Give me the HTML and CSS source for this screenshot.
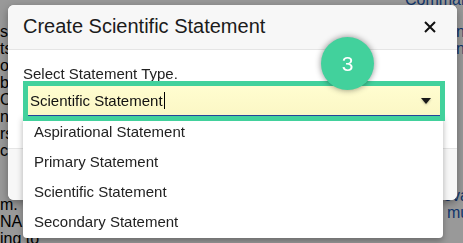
FILE: index.html
```html
<!DOCTYPE html>
<html>
<head>
<meta charset="utf-8">
<link rel="stylesheet" href="styles.css">
</head>
<body>
<div class="page">
  <div class="col-left">
    <div class="block block-upper">
      <div>s a</div><div>ts</div><div>o</div><div>b</div><div>CT</div><div>na</div><div>rs</div><div>c</div>
    </div>
    <div class="block block-lower">
      <div>m.</div><div>NA</div><div>ing to</div>
    </div>
  </div>
  <div class="col-right">
    <div class="line-cmd">Command</div>
    <div class="block block-r-upper">
      <div>nal</div><div>nd</div>
    </div>
    <div class="block block-r-lower">
      <div class="r-eva">evaluate</div><div class="r-mun">munity</div>
    </div>
  </div>
</div>
<div class="backdrop"></div>
<div class="modal">
  <div class="modal-header">
    <h4 class="modal-title">Create Scientific Statement</h4>
    <button class="close" type="button" aria-label="Close">
      <svg width="12" height="12" viewBox="0 0 12 12"><path d="M1 1 L11 11 M11 1 L1 11" stroke="#111" stroke-width="2" fill="none"/></svg>
    </button>
  </div>
  <div class="modal-body">
    <label class="field-label">Select Statement Type.</label>
    <div class="select-wrap">
      <div class="select-field">
        <span class="value">Scientific Statement</span><span class="caret"></span>
        <span class="arrow"></span>
      </div>
      <ul class="options">
        <li>Aspirational Statement</li>
        <li>Primary Statement</li>
        <li>Scientific Statement</li>
        <li>Secondary Statement</li>
      </ul>
    </div>
  </div>
  <div class="modal-footer"></div>
  <div class="step-badge">3</div>
</div>
</body>
</html>
```
FILE: styles.css
```css
html, body {
  margin: 0;
  padding: 0;
  width: 463px;
  height: 243px;
  overflow: hidden;
  background: #ffffff;
  font-family: "Liberation Sans", Arial, sans-serif;
}

.page {
  display: flex;
  justify-content: space-between;
  height: 243px;
  font-size: 16px;
  line-height: 17px;
  color: #000;
}

.col-left {
  width: 60px;
  padding-top: 23px;
}

.block-lower {
  margin-top: 37px;
}

.col-right {
  width: 58px;
  color: #1d5bb4;
  white-space: nowrap;
  line-height: 17.5px;
}

.line-cmd {
  margin-top: -9px;
}

.block-r-upper {
  margin-top: 14px;
  padding-left: 51px;
}

.block-r-lower {
  margin-top: 129px;
}

.r-eva {
  padding-left: 38px;
}

.r-mun {
  padding-left: 42px;
}

.backdrop {
  position: fixed;
  inset: 0;
  background: rgba(0, 0, 0, 0.4);
}

.modal {
  position: absolute;
  left: 8px;
  top: 5px;
  width: 449px;
  height: 195px;
  background: #fff;
  border-radius: 6px;
  box-shadow: 0 3px 9px rgba(0, 0, 0, 0.35);
  display: flex;
  flex-direction: column;
}

.modal-header {
  display: flex;
  align-items: center;
  justify-content: space-between;
  padding: 10px 0 11px 15px;
  background: #f7f7f7;
  border-bottom: 1px solid #e5e5e5;
  border-radius: 6px 6px 0 0;
}

.modal-title {
  margin: 0;
  font-size: 20px;
  line-height: 23px;
  font-weight: normal;
  color: #1b1b1b;
}

.close {
  border: 0;
  background: none;
  padding: 0;
  margin: 0 21px 0 0;
  width: 12px;
  height: 12px;
  display: flex;
}

.modal-body {
  padding: 16px 17px 32px 15px;
}

.field-label {
  display: block;
  font-size: 15px;
  line-height: 16px;
  color: #222;
  margin-bottom: 4px;
}

.select-wrap {
  position: relative;
  margin-left: 5px;
}

.select-field {
  position: relative;
  z-index: 2;
  box-sizing: border-box;
  height: 30px;
  display: flex;
  align-items: center;
  padding: 0 9px 0 2px;
  background: linear-gradient(#fffdd0, #fbf7c5);
  border-bottom: 1px solid #24449a;
  outline: 5px solid #42d19c;
  font-size: 15px;
  color: #111;
}

.caret {
  display: inline-block;
  width: 1px;
  height: 17px;
  background: #000;
  margin-left: 1px;
}

.arrow {
  margin-left: auto;
  width: 0;
  height: 0;
  border-left: 5.5px solid transparent;
  border-right: 5.5px solid transparent;
  border-top: 6px solid #1a1a1a;
  filter: drop-shadow(0 1px 1px rgba(0, 0, 0, 0.25));
}

.options {
  position: absolute;
  z-index: 1;
  top: 30px;
  left: -5px;
  width: 420px;
  margin: 0;
  padding: 1px 0;
  list-style: none;
  background: #fff;
  border-radius: 0 0 4px 4px;
  box-shadow: 0 3px 6px rgba(0, 0, 0, 0.3);
}

.options li {
  height: 30px;
  line-height: 30px;
  padding-left: 11px;
  font-size: 15px;
  color: #222;
}

.modal-footer {
  flex: 1;
  background: #f7f7f7;
  border-top: 1px solid #e5e5e5;
  border-radius: 0 0 6px 6px;
}

.step-badge {
  position: absolute;
  z-index: 3;
  left: 313px;
  top: 32px;
  width: 53px;
  height: 53px;
  border-radius: 50%;
  background: #42d19c;
  color: #fff;
  font-size: 21px;
  display: flex;
  align-items: center;
  justify-content: center;
  box-shadow: 0 0 6px rgba(0, 0, 0, 0.45);
}
```
